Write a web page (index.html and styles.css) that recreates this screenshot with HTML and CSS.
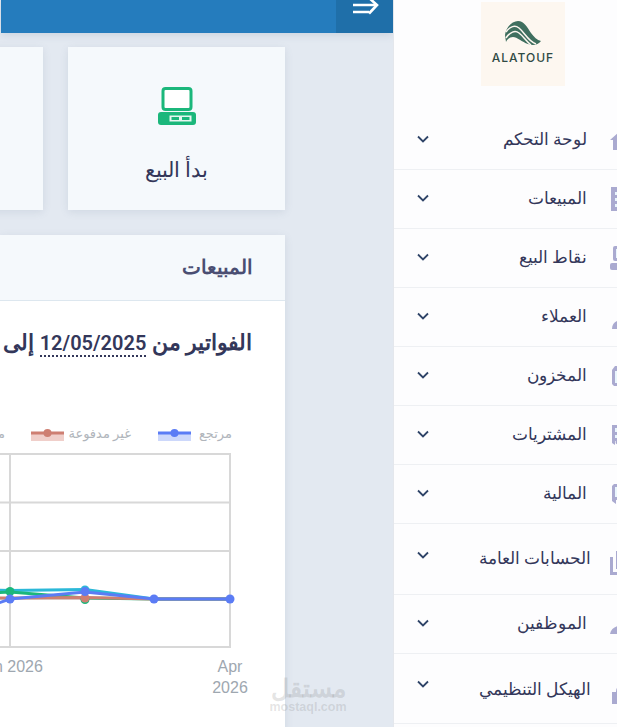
FILE: index.html
```html
<!DOCTYPE html>
<html lang="ar">
<head>
<meta charset="utf-8">
<title>لوحة التحكم</title>
<link rel="stylesheet" href="styles.css">
</head>
<body>
<main class="main" dir="rtl">
  <header class="topbar">
    <button class="toggle" aria-label="toggle">
      <svg width="26" height="16" viewBox="0 0 26 16"><g fill="none" stroke="#fff" stroke-width="2.600"><path d="M1 5H24M1 12H17"/><path d="M16 -3L25 5L17 13.500"/></g></svg>
    </button>
  </header>
  <section class="cards">
    <a class="card">
      <svg class="card-icon" width="38" height="38" viewBox="0 0 38 38"><rect x="5" y="1.500" width="28" height="21" rx="2.500" fill="#fff" stroke="#1bb77b" stroke-width="3"/><rect x="0" y="25" width="38" height="13" rx="3" fill="#1bb77b"/><rect x="11.500" y="28.500" width="22" height="6" fill="#e6f7f0"/><rect x="13.500" y="30" width="7.500" height="3" fill="#1bb77b"/><rect x="24" y="30" width="7.500" height="3" fill="#1bb77b"/></svg>
      <span class="card-label">بدأ البيع</span>
    </a>
    <a class="card"></a>
  </section>
  <section class="panel">
    <h2 class="panel-head">المبيعات</h2>
    <div class="panel-body">
      <h3 class="range">الفواتير من <span class="date">12/05/2025</span> إلى</h3>
      <svg class="chart" width="285" height="290" viewBox="0 410 285 290">
        <g fill="none" stroke="#d8d8d8" stroke-width="2">
          <path d="M-10 454H230V647H-10"/>
          <path d="M-10 502.500H230M-10 551H230M-10 599H230"/>
          <path d="M10 454V647M230 454V647"/>
        </g>
        <rect x="158" y="433" width="33" height="8" fill="#cdd8fb"/>
        <path d="M158 433H191" stroke="#5b7cf5" stroke-width="3"/>
        <circle cx="174.500" cy="433" r="4" fill="#5b7cf5"/>
        <text class="legend" x="232" y="438" text-anchor="start">مرتجع</text>
        <rect x="31" y="433" width="33" height="8" fill="#f0cfca"/>
        <path d="M31 433H64" stroke="#ce7f72" stroke-width="3"/>
        <circle cx="47.500" cy="433" r="4" fill="#ce7f72"/>
        <text class="legend" x="131" y="438" text-anchor="start">غير مدفوعة</text>
        <text class="legend" x="5" y="438" text-anchor="start">مدفوعة</text>
        <g fill="none" stroke-width="3">
          <path d="M-10 590L10 590.500L85 589.500L154 599H230" stroke="#2bb8d8"/>
          <path d="M-10 593L10 592L85 598L154 599H230" stroke="#1bb77b"/>
          <path d="M-10 598H10L85 597.500L154 599H230" stroke="#ce7f72"/>
          <path d="M-10 606L10 599L85 592L154 599H230" stroke="#5b7cf5"/>
        </g>
        <circle cx="10" cy="591.500" r="4.500" fill="#1bb77b"/>
        <circle cx="85" cy="599.500" r="4.500" fill="#1bb77b"/>
        <circle cx="85" cy="598" r="4.500" fill="#ce7f72"/>
        <circle cx="85" cy="590" r="4.500" fill="#2bb8d8"/>
        <g fill="#5b7cf5">
          <circle cx="10" cy="599" r="4.500"/>
          <circle cx="85" cy="591.500" r="4.500"/>
          <circle cx="154" cy="599" r="4.500"/>
          <circle cx="230" cy="599" r="4.500"/>
        </g>
        <text class="tick" x="10" y="672" text-anchor="middle" direction="ltr">Jan 2026</text>
        <text class="tick" x="230" y="672" text-anchor="middle" direction="ltr">Apr</text>
        <text class="tick" x="230" y="693" text-anchor="middle" direction="ltr">2026</text>
      </svg>
    </div>
  </section>
</main>
<aside class="sidebar">
  <div class="logo">
    <svg width="36" height="26" viewBox="0 0 36 26"><path fill="#3f6f5f" d="M0 14C1 5 8 0 13 0C19 0 22 6 26 12C29 16 32 19 36 20C33 24 28 25 23 23C17 21 12 16 8 16C5 16 2 18 1 21Z"/><g fill="none" stroke="#fdf7f0" stroke-width="1.500"><path d="M1 11C5 5 10 4 14 7C20 12 23 20 31 23"/><path d="M1 17C5 11 10 9 14 12C18 15 21 20 26 24"/></g></svg>
    <span class="logo-text">ALATOUF</span>
  </div>
  <nav class="menu">
    <a class="row"><svg class="chev" viewBox="0 0 12 8"><path d="M1 1.500L6 6.500L11 1.500"/></svg><span class="row-text">لوحة التحكم</span><svg class="ico" viewBox="0 0 20 20"><path d="M0 10L10 1L20 10H17V20H3V10Z"/></svg></a>
    <a class="row"><svg class="chev" viewBox="0 0 12 8"><path d="M1 1.500L6 6.500L11 1.500"/></svg><span class="row-text">المبيعات</span><svg class="ico ico-tall" viewBox="0 0 20 26"><path d="M1 1H20V25H1Z"/><path class="hole" d="M5 6H20V9H5ZM5 12H20V15H5ZM5 18H20V21H5Z"/></svg></a>
    <a class="row"><svg class="chev" viewBox="0 0 12 8"><path d="M1 1.500L6 6.500L11 1.500"/></svg><span class="row-text">نقاط البيع</span><svg class="ico ico-tall" viewBox="0 0 20 26"><rect x="3" y="1" width="17" height="15" rx="2"/><rect class="hole" x="6" y="4" width="14" height="9"/><rect x="0" y="18" width="20" height="7" rx="2"/></svg></a>
    <a class="row"><svg class="chev" viewBox="0 0 12 8"><path d="M1 1.500L6 6.500L11 1.500"/></svg><span class="row-text">العملاء</span><svg class="ico ico-low" viewBox="0 0 20 20"><circle cx="12" cy="2" r="5"/><path d="M2 17C2 11 6 8 12 8C18 8 20 11 20 17Z"/></svg></a>
    <a class="row"><svg class="chev" viewBox="0 0 12 8"><path d="M1 1.500L6 6.500L11 1.500"/></svg><span class="row-text">المخزون</span><svg class="ico" viewBox="0 0 20 20"><path d="M5 0L2 4V18L4 20H20V0Z"/><path class="hole" d="M5 5H20V17H5Z"/></svg></a>
    <a class="row"><svg class="chev" viewBox="0 0 12 8"><path d="M1 1.500L6 6.500L11 1.500"/></svg><span class="row-text">المشتريات</span><svg class="ico" viewBox="0 0 20 20"><path d="M2 0H20V16H5V20L2 18Z"/><path class="hole" d="M5 3H20V7H5ZM5 10H20V13H5Z"/><circle cx="8" cy="17" r="2.500"/></svg></a>
    <a class="row"><svg class="chev" viewBox="0 0 12 8"><path d="M1 1.500L6 6.500L11 1.500"/></svg><span class="row-text">المالية</span><svg class="ico" viewBox="0 0 20 20"><path d="M2 2L4 0H20V16H6V20L2 17Z"/><path class="hole" d="M5 3H20V13H5Z"/><rect x="8" y="6" width="12" height="4"/></svg></a>
    <a class="row row-tall"><svg class="chev" viewBox="0 0 12 8"><path d="M1 1.500L6 6.500L11 1.500"/></svg><span class="row-text">الحسابات العامة</span><svg class="ico" viewBox="0 0 20 24"><path d="M0 6H3V21H20V24H0Z"/><path d="M6 0H20V18H6Z"/><path class="hole" d="M9 3H20V15H9Z"/><path d="M12 5H20V12H12Z"/></svg></a>
    <a class="row"><svg class="chev" viewBox="0 0 12 8"><path d="M1 1.500L6 6.500L11 1.500"/></svg><span class="row-text">الموظفين</span><svg class="ico" viewBox="0 0 20 20"><circle cx="12" cy="5" r="5"/><path class="hole" d="M11 3H20V7H11Z"/><path d="M0 20C1 14 6 12 12 11C14 11 18 12 20 14V20ZM4 17H20V19H4Z"/></svg></a>
    <a class="row row-last"><svg class="chev" viewBox="0 0 12 8"><path d="M1 1.500L6 6.500L11 1.500"/></svg><span class="row-text">الهيكل التنظيمي</span><svg class="ico ico-low" viewBox="0 0 20 20"><path d="M6 8C6 3 9 1 13 1C16 1 18 2 20 4V7C17 5 14 4 13 4C10 4 9 6 9 8H20V20H2V8Z"/></svg></a>
  </nav>
</aside>
<div class="watermark"><span class="wm-ar">مستقل</span><span class="wm-en">mostaql.com</span></div>
</body>
</html>
```
FILE: styles.css
```css
* { box-sizing: border-box; }
html, body { margin: 0; height: 100%; }
body {
  display: flex;
  width: 617px;
  height: 727px;
  overflow: hidden;
  position: relative;
  background: #e3e9f1;
  font-family: Roboto, "Noto Sans", sans-serif;
  color: #33375a;
}
.main {
  width: 393px;
  height: 727px;
  flex: none;
  overflow: hidden;
  background: #e3e9f1;
}
.topbar {
  height: 33px;
  width: 392px;
  background: #257cbd;
  box-shadow: 0 2px 8px rgba(90, 110, 140, .18);
  display: flex;
  justify-content: flex-start;
}
.toggle {
  width: 57px;
  height: 33px;
  border: 0;
  padding: 0;
  background: #1f6fa9;
  display: flex;
  align-items: flex-start;
  justify-content: center;
  overflow: hidden;
}
.toggle svg { overflow: visible; }
.cards {
  display: flex;
  gap: 25px;
  padding: 14px 108px 0 0;
  width: 700px;
}
.card {
  flex: none;
  width: 217px;
  height: 163px;
  background: #f5f9fc;
  box-shadow: 0 2px 8px rgba(90, 110, 140, .14);
  display: flex;
  flex-direction: column;
  align-items: center;
  padding-top: 40px;
}
.card-icon { display: block; }
.card-label {
  margin-top: 32px;
  font-size: 21px;
  line-height: 26px;
  color: #33375a;
}
.panel {
  margin: 25px 108px 0 0;
  width: 285px;
  height: 500px;
  background: #fff;
  box-shadow: 0 2px 8px rgba(90, 110, 140, .14);
}
.panel-head {
  margin: 0;
  height: 66px;
  padding: 19px 32px 0 0;
  background: #f5f9fc;
  border-bottom: 1px solid #dde7ef;
  font-size: 20px;
  line-height: 26px;
  font-weight: 600;
  color: #4a4e72;
}
.range {
  margin: 0;
  padding: 27px 33px 0 0;
  font-size: 21.500px;
  line-height: 30px;
  font-weight: 600;
  white-space: nowrap;
  color: #33375a;
  height: 109px;
}
.date { font-size: 20px; border-bottom: 2px dotted #33375a; }
.chart { display: block; overflow: hidden; }
.legend { font-family: "Liberation Serif", "DejaVu Sans", serif; font-size: 13px; fill: #b0b5bb; }
.tick { font-family: "Liberation Sans", sans-serif; font-size: 16px; fill: #9ea7b0; }
.sidebar {
  width: 224px;
  flex: none;
  height: 727px;
  overflow: hidden;
  background: #fdfdfe;
  border-left: 1px solid #e4e7ec;
}
.logo {
  width: 84px;
  height: 84px;
  margin: 2px 0 25px 87px;
  background: #fdf7f0;
  display: flex;
  flex-direction: column;
  align-items: center;
  padding-top: 19px;
}
.logo-text {
  font-family: Inter, "Liberation Sans", sans-serif;
  font-size: 12px;
  line-height: 14px;
  font-weight: 500;
  letter-spacing: 1px;
  margin-top: 4px;
  color: #2f4a44;
}
.menu { width: 236px; }
.row {
  display: flex;
  align-items: center;
  height: 59px;
  padding-left: 23px;
  border-bottom: 1px solid #eef0f3;
}
.row-text {
  margin-left: auto;
  margin-top: -2px;
  font-size: 17px;
  line-height: 26px;
  color: #33375a;
  white-space: nowrap;
}
.chev { width: 12px; height: 8px; flex: none; margin-top: -2px; }
.chev path { fill: none; stroke: #2f4468; stroke-width: 1.800; }
.ico { width: 20px; height: 20px; flex: none; margin-left: 23px; fill: #aaaad0; }
.ico-tall { height: 26px; }
.ico-low { margin-top: 10px; }
.hole { fill: #eaf6fd; }
.row-tall { height: 71px; }
.row-tall .ico { height: 24px; margin-left: 19px; margin-top: 8px; }
.row-last { height: 70px; }
.row-last .ico { margin-left: 19px; margin-top: 10px; }
.row-tall .chev { margin-top: -8px; }
.row-last .chev { margin-top: -9px; }
.row-tall .row-text { margin-top: -3px; }
.row-last .row-text { margin-top: 1px; }
.watermark {
  position: absolute;
  left: 270px;
  top: 677px;
  width: 76px;
  display: flex;
  flex-direction: column;
  align-items: center;
  pointer-events: none;
  color: rgba(120, 120, 120, .2);
}
.wm-ar { font-size: 25px; line-height: 23px; font-weight: 700; }
.wm-en { font-family: "Liberation Sans", sans-serif; font-size: 12.500px; line-height: 10px; font-weight: 700; margin-top: 2px; }
```
